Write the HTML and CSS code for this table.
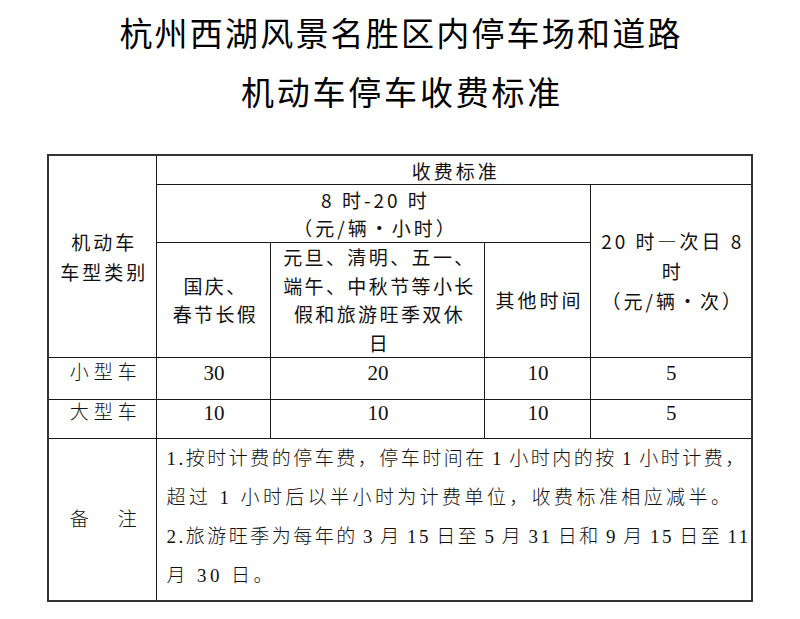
FILE: index.html
```html
<!DOCTYPE html>
<html lang="zh-CN">
<head>
<meta charset="utf-8">
<title>杭州西湖风景名胜区内停车场和道路机动车停车收费标准</title>
<link rel="stylesheet" href="styles.css">
</head>
<body>
<header class="title">
  <div class="title-line l1">杭州西湖风景名胜区内停车场和道路</div>
  <div class="title-line l2">机动车停车收费标准</div>
</header>
<table class="fee">
  <colgroup>
    <col class="c1"><col class="c2"><col class="c3"><col class="c4"><col class="c5">
  </colgroup>
  <tr class="r1">
    <th rowspan="3" class="type">机动车<br>车型类别</th>
    <th colspan="4" class="top">收费标准</th>
  </tr>
  <tr class="r2">
    <th colspan="3" class="two">8 时-20 时<br>（元/辆・小时）</th>
    <th rowspan="2">20 时—次日 8<br>时<br>（元/辆・次）</th>
  </tr>
  <tr class="r3">
    <th class="tight">国庆、<br>春节长假</th>
    <th class="tight">元旦、清明、五一、<br>端午、中秋节等小长<br>假和旅游旺季双休<br>日</th>
    <th>其他时间</th>
  </tr>
  <tr class="r4">
    <td class="name">小型车</td>
    <td class="num">30</td>
    <td class="num">20</td>
    <td class="num">10</td>
    <td class="num">5</td>
  </tr>
  <tr class="r5">
    <td class="name">大型车</td>
    <td class="num">10</td>
    <td class="num">10</td>
    <td class="num">10</td>
    <td class="num">5</td>
  </tr>
  <tr class="r6">
    <td class="name">备　注</td>
    <td colspan="4" class="notes">
      <div class="line just">1.按时计费的停车费，停车时间在 1 小时内的按 1 小时计费，</div>
      <div class="line">超过 1 小时后以半小时为计费单位，收费标准相应减半。</div>
      <div class="line just">2.旅游旺季为每年的 3 月 15 日至 5 月 31 日和 9 月 15 日至 11</div>
      <div class="line">月 30 日。</div>
    </td>
  </tr>
</table>
</body>
</html>
```

FILE: styles.css
```css
html, body {
  margin: 0;
  padding: 0;
  background: #ffffff;
  color: #111111;
}

body {
  width: 800px;
  height: 619px;
  overflow: hidden;
  font-family: "Noto Sans CJK SC", "Noto Sans", sans-serif;
}

.title {
  padding-top: 3px;
  margin-bottom: 33px;
  text-align: center;
}

.title-line {
  font-size: 33px;
  line-height: 59px;
  font-weight: 400;
  color: #000;
}

.title-line.l1 {
  letter-spacing: 2.2px;
  padding-left: 2px;
}

.title-line.l2 {
  letter-spacing: 2.8px;
  padding-left: 4px;
}

.fee {
  width: 704px;
  margin: 0 auto;
  border-collapse: collapse;
  table-layout: fixed;
  border: 2px solid #333;
}

.c1 { width: 109px; }
.c2 { width: 114px; }
.c3 { width: 214px; }
.c4 { width: 106px; }
.c5 { width: 161px; }

.fee th,
.fee td {
  border: 1px solid #1a1a1a;
  padding: 0;
  text-align: center;
  vertical-align: middle;
}

.fee th {
  font-weight: 400;
  font-size: 19px;
  line-height: 30px;
  letter-spacing: 3px;
  padding-left: 3px;
}

.fee th.top {
  line-height: 26px;
  padding-top: 2px;
}

.fee th.two {
  line-height: 28px;
}

.fee th.tight {
  line-height: 28.5px;
  letter-spacing: 2.4px;
}

.r1 { height: 29px; }
.r2 { height: 58px; }
.r3 { height: 115px; }
.r4 { height: 42px; }
.r5 { height: 39px; }
.r6 { height: 161px; }

.fee td.name {
  font-family: "Liberation Serif", "Noto Sans CJK SC", serif;
  font-weight: 300;
  font-size: 19px;
  line-height: 24px;
  letter-spacing: 5px;
  padding-left: 6px;
  padding-bottom: 12px;
}

.r6 td.name {
  padding-bottom: 0;
}

.fee td.num {
  font-family: "Liberation Serif", "Times New Roman", serif;
  font-size: 21px;
  line-height: 24px;
  padding-bottom: 12px;
}

.fee td.notes {
  font-family: "Liberation Serif", "Noto Sans CJK SC", serif;
  font-weight: 300;
  font-size: 19px;
  line-height: 39px;
  letter-spacing: 3.4px;
  text-align: left;
  padding: 0 7px 5px 9px;
}

.notes .line {
  white-space: nowrap;
}

.notes .just {
  letter-spacing: 2.5px;
  word-spacing: -2px;
  text-align: justify;
  text-align-last: justify;
}
```
